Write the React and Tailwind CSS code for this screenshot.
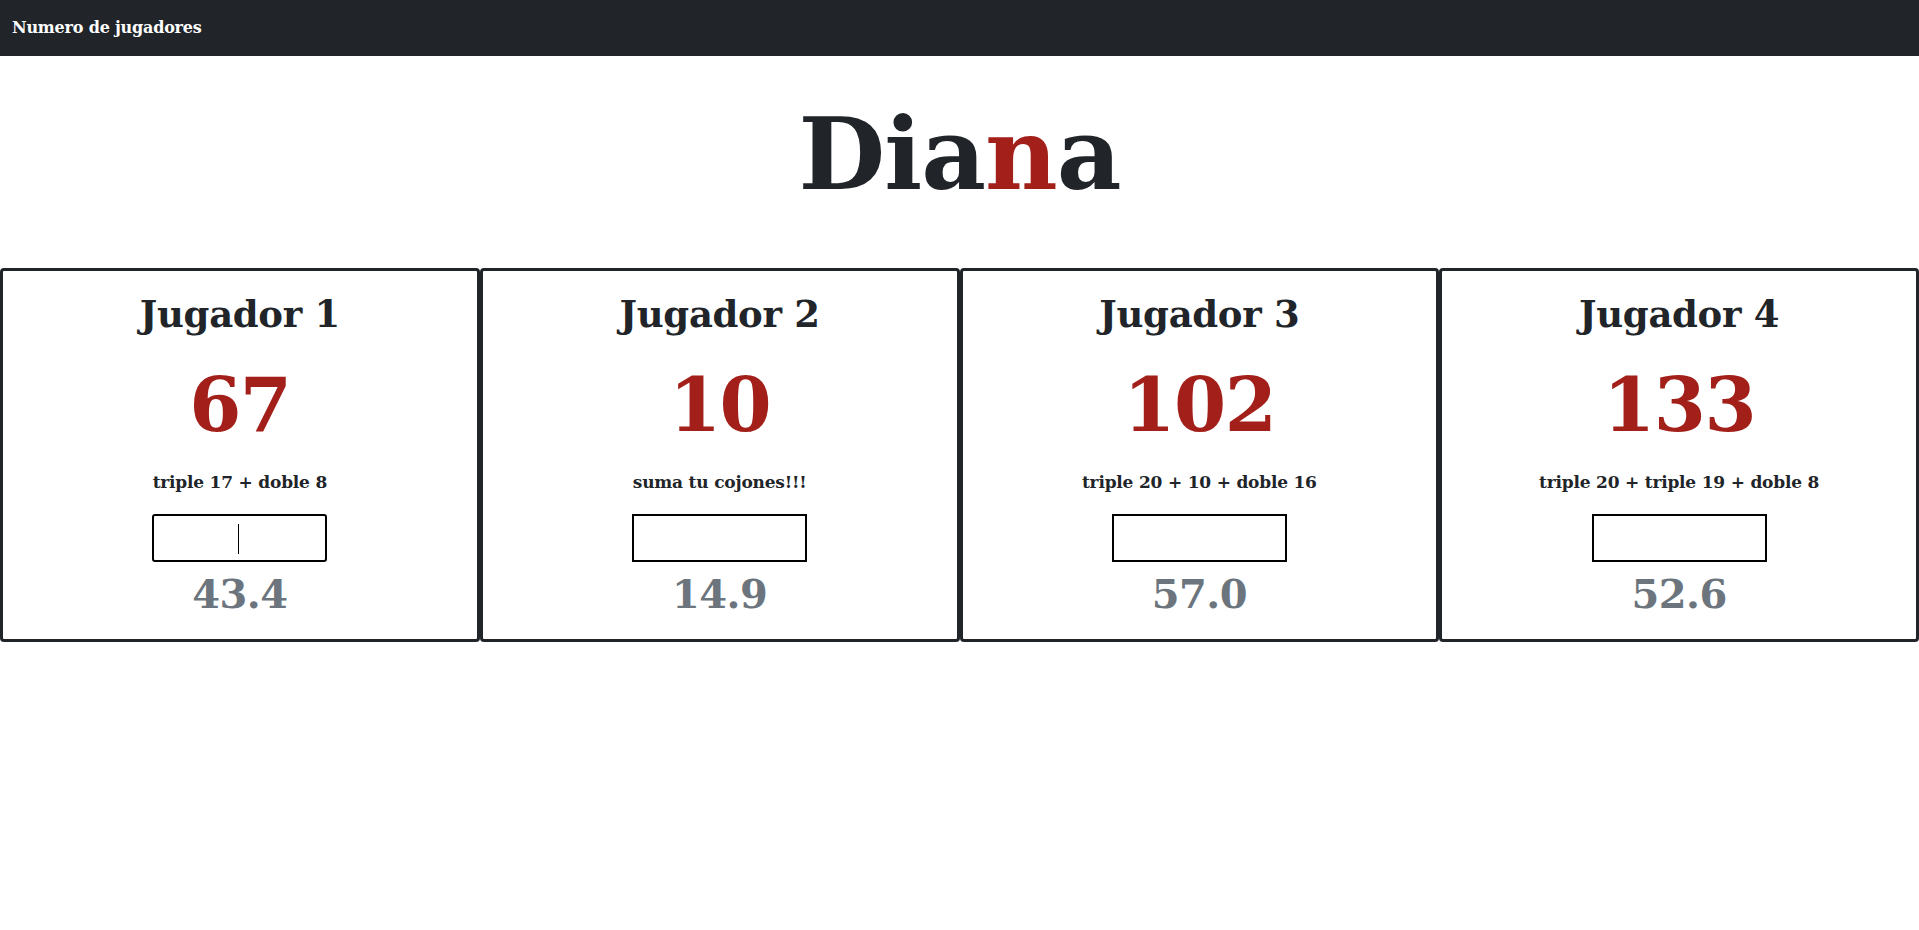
import React from "react";

const players = [
  { name: "Jugador 1", score: "67", hint: "triple 17 + doble 8", avg: "43.4", focused: true },
  { name: "Jugador 2", score: "10", hint: "suma tu cojones!!!", avg: "14.9" },
  { name: "Jugador 3", score: "102", hint: "triple 20 + 10 + doble 16", avg: "57.0" },
  { name: "Jugador 4", score: "133", hint: "triple 20 + triple 19 + doble 8", avg: "52.6" },
];

export default function App() {
  return (
    <div className="min-h-[930px] bg-white text-[#212529]" style={{ fontFamily: '"DejaVu Serif", "Liberation Serif", serif' }}>
      <nav className="h-[56px] bg-[#212529] flex items-center px-[12px]">
        <span className="text-white font-bold text-[16px] tracking-[-0.2px]">Numero de jugadores</span>
      </nav>
      <h1 className="mt-[48px] text-center text-[100px] leading-none font-bold tracking-[-1px]">
        Dia<span className="text-[#a3201a]">n</span>a
      </h1>
      <div className="mt-[64px] flex">
        {players.map((p) => (
          <div key={p.name} className="flex-1 border-[3px] border-[#212529] rounded-[4px] flex flex-col items-center pt-[25px] pb-[25px]">
            <h2 className="text-[37px] leading-none font-bold tracking-[-0.3px]">{p.name}</h2>
            <div className="mt-[35px] text-[75px] leading-none font-bold text-[#a3201a] tracking-[-1.5px]">{p.score}</div>
            <div className="mt-[31px] text-[17px] leading-none font-bold tracking-[-0.2px]">{p.hint}</div>
            <div className="relative mt-[23px]">
              <input
                type="text"
                className={
                  p.focused
                    ? "block w-[175px] h-[48px] border-2 border-black rounded-[3px] text-center outline-none"
                    : "block w-[175px] h-[48px] border-2 border-black text-center outline-none"
                }
              />
              {p.focused && (
                <span className="absolute left-[86px] top-[10px] w-px h-[30px] bg-black" />
              )}
            </div>
            <div className="mt-[12px] text-[40px] leading-none font-bold text-[#6c757d] tracking-[-0.5px]">{p.avg}</div>
          </div>
        ))}
      </div>
    </div>
  );
}
